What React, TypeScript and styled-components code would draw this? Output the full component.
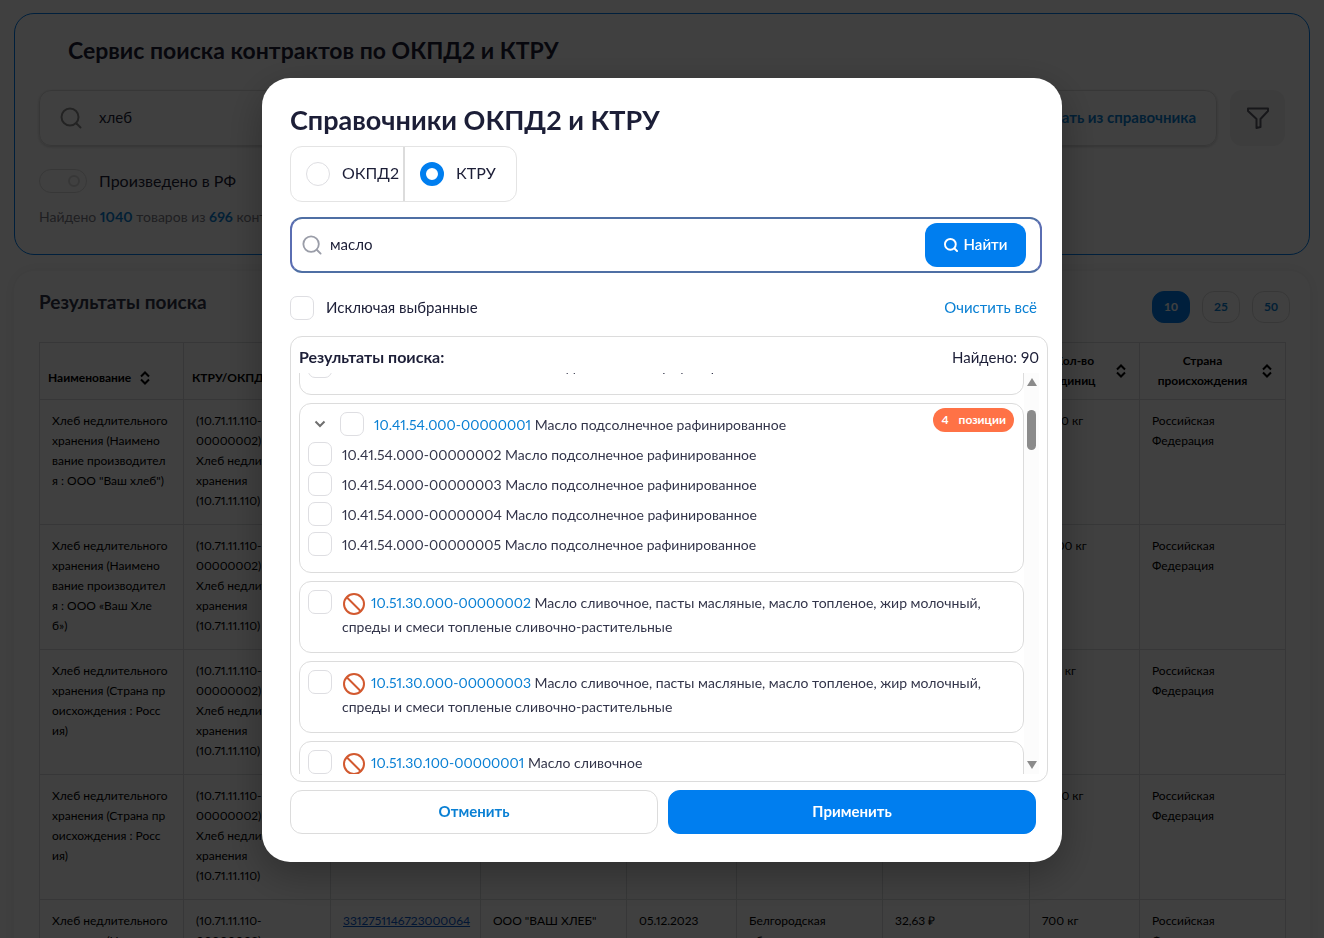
import React, { useLayoutEffect, useRef, useState } from "react";
import styled, { createGlobalStyle, css } from "styled-components";

const GlobalStyle = createGlobalStyle`
  *, *::before, *::after { box-sizing: border-box; }
  body {
    margin: 0;
    overflow: hidden;
    background: #fff;
    color: #1c1e37;
    font-family: Lato, "Open Sans", sans-serif;
    font-size: 15px;
    font-variant-numeric: proportional-nums;
  }
  button, input { font-family: inherit; }
`;

const Page = styled.div`
  display: flex;
  flex-direction: column;
  gap: 16px;
  height: 100vh;
  padding: 13px 14px 0;
  overflow: hidden;
`;

const SearchCard = styled.section`
  flex: none;
  border: 1px solid #007eef;
  border-radius: 20px;
  padding: 20px 24px 25px;
`;

const PageTitle = styled.h1`
  margin: 0 0 24px;
  padding-left: 29px;
  font-size: 23px;
  line-height: 32px;
  font-weight: 700;
`;

const SearchRow = styled.div`
  display: flex;
  gap: 13px;
`;

const SearchField = styled.div`
  flex: 1;
  display: flex;
  align-items: center;
  height: 56px;
  padding: 0 20px;
  border: 1px solid #dcdcdc;
  border-radius: 12px;
  box-shadow: 0 1px 3px rgba(0, 0, 0, 0.2);
`;

const TextInput = styled.input`
  flex: 1;
  min-width: 0;
  height: 40px;
  padding: 0 0 2px;
  border: 0;
  outline: 0;
  background: transparent;
  color: #1c1e37;
  font-size: 15px;
`;

const PageInput = styled(TextInput)`
  margin-left: 17px;
`;

const LinkButton = styled.button`
  padding: 0 0 2px;
  border: 0;
  background: none;
  color: #0a80d4;
  font-size: 15px;
  line-height: 20px;
  cursor: pointer;
`;

const BoldLinkButton = styled(LinkButton)`
  font-weight: 700;
`;

const FilterButton = styled.button`
  display: grid;
  place-items: center;
  width: 55px;
  height: 56px;
  border: 0;
  border-radius: 12px;
  background: #f3f3f3;
`;

const SwitchLabel = styled.label`
  display: flex;
  align-items: center;
  gap: 12px;
  margin-top: 23px;
  font-size: 16px;
  line-height: 24px;
`;

const SwitchInput = styled.input`
  appearance: none;
  display: flex;
  align-items: center;
  justify-content: flex-end;
  width: 48px;
  height: 24px;
  margin: 0;
  padding: 0 6px;
  border: 1px solid #dcdcdc;
  border-radius: 12px;

  &::before {
    content: "";
    width: 12px;
    height: 12px;
    border: 2px solid #dcdcdc;
    border-radius: 50%;
  }
`;

const FoundLine = styled.p`
  margin: 12px 0 0;
  color: #7d7d86;
  font-size: 14px;
  line-height: 24px;

  b { color: #0a80d4; }
`;

const ResultsCard = styled.section`
  flex: none;
  padding: 20px 24px 20px 25px;
  border-radius: 20px;
  box-shadow: 0 0 16px rgba(0, 0, 0, 0.08);
`;

const ResultsHead = styled.div`
  display: flex;
  justify-content: space-between;
  margin-bottom: 19px;
`;

const ResultsTitle = styled.h2`
  margin: 0;
  font-size: 19px;
  line-height: 22px;
  color: #33354a;
`;

const PageSizes = styled.div`
  display: flex;
  gap: 12px;
  margin-right: -4px;
`;

const PageSize = styled.button<{ $active?: boolean }>`
  width: 38px;
  height: 32px;
  padding: 0 0 2px;
  border: 1px solid ${(p) => (p.$active ? "#007eef" : "#dcdcdc")};
  border-radius: 12px;
  background: ${(p) => (p.$active ? "#007eef" : "#fff")};
  color: ${(p) => (p.$active ? "#fff" : "#0a80d4")};
  font-size: 12px;
  font-weight: 700;
`;

const Table = styled.table`
  width: 100%;
  table-layout: fixed;
  border-collapse: collapse;
  font-size: 12px;
  line-height: 20px;
  color: #000;
`;

const Th = styled.th`
  height: 57px;
  padding: 8px;
  border: 1px solid #dadcde;
`;

const ThInner = styled.div<{ $single?: boolean }>`
  display: flex;
  align-items: center;
  justify-content: space-between;
  ${(p) => p.$single && css`
    justify-content: flex-start;
    gap: 4px;
    padding-top: 14px;
    white-space: nowrap;
  `}

  span { flex: ${(p) => (p.$single ? "none" : "1")}; }
`;

const Td = styled.td`
  height: 125px;
  padding: 11px 12px;
  border: 1px solid #dadcde;
  vertical-align: top;
  white-space: pre;

  a { color: #0a58ca; }
`;

const Overlay = styled.div`
  position: fixed;
  inset: 0;
  display: grid;
  place-items: center;
  padding-top: 2px;
  background: rgba(0, 0, 0, 0.75);
`;

const Modal = styled.div`
  width: min(800px, 100%);
  padding: 24px 14px 28px 28px;
  border-radius: 28px;
  background: #fff;
  box-shadow: 0 12px 40px rgba(0, 0, 0, 0.3);
`;

const ModalTitle = styled.h2`
  margin: 0 0 8px;
  font-size: 27px;
  line-height: 36px;
`;

const Segments = styled.div`
  display: flex;
  width: fit-content;
  height: 56px;
  border: 1px solid #e4e4e4;
  border-radius: 12px;
`;

const Segment = styled.label`
  display: flex;
  align-items: center;
  gap: 12px;
  width: 112px;
  padding-left: 15px;
  font-size: 16px;

  & + & {
    width: 113px;
    border-left: 2px solid #dcdcdc;
  }

  span { padding-bottom: 4px; }
`;

const Radio = styled.input`
  appearance: none;
  flex: none;
  width: 24px;
  height: 24px;
  margin: 0;
  border: 1px solid #dedee2;
  border-radius: 50%;

  &:checked { border: 6px solid #007eef; }
`;

const ModalSearch = styled.div`
  display: flex;
  align-items: center;
  gap: 8px;
  height: 56px;
  margin: 15px 6px 0 0;
  padding: 0 14px 0 10px;
  border: 2px solid;
  border-color: #4f6fa4 #5a6db2;
  border-radius: 12px;
`;

const FindButton = styled.button`
  display: flex;
  align-items: center;
  justify-content: center;
  gap: 6px;
  width: 101px;
  height: 44px;
  border: 0;
  border-radius: 12px;
  background: #007eef;
  color: #fff;
  font-size: 15px;
  font-weight: 600;

  span { padding-bottom: 2px; }
`;

const OptionsRow = styled.div`
  display: flex;
  align-items: center;
  justify-content: space-between;
  margin: 23px 11px 0 0;
`;

const CheckLabel = styled.label`
  display: flex;
  gap: 12px;
  line-height: 22px;
`;

const Check = styled.input`
  appearance: none;
  flex: none;
  width: 24px;
  height: 24px;
  margin: 0;
  border: 1px solid #dedee2;
  border-radius: 7px;
  background: #fff;

  &:checked { background: #007eef; }
`;

const Panel = styled.div`
  margin-top: 16px;
  padding: 8px 8px 7px;
  border: 1px solid #dcdcdc;
  border-radius: 12px;
`;

const PanelHead = styled.div`
  display: flex;
  justify-content: space-between;
  height: 28px;
  line-height: 24px;

  b { font-size: 16px; }
`;

const Scroller = styled.div`
  display: flex;
  height: 401px;
`;

const Items = styled.div`
  flex: 1;
  display: flex;
  flex-direction: column;
  gap: 8px;
  overflow-y: auto;
  scrollbar-width: none;
`;

const Track = styled.div`
  display: flex;
  flex-direction: column;
  align-items: center;
  justify-content: space-between;
  width: 15px;
  padding: 5px 0;
  background: #fcfcfc;
`;

const Thumb = styled.div`
  width: 9px;
  height: 40px;
  margin: 24px 0 auto;
  border-radius: 5px;
  background: #8b8b8b;
`;

const Item = styled.div`
  position: relative;
  flex: none;
  padding: 8px 8px 0;
  border: 1px solid #dcdcdc;
  border-radius: 12px;
  color: #33354a;
  font-size: 14px;
`;

const PlainItem = styled(Item)`
  min-height: 72px;
`;

const GroupItem = styled(Item)`
  padding-bottom: 10px;
`;

const ItemRow = styled.div`
  display: flex;
  align-items: flex-start;
  min-height: 30px;
`;

const ItemLabel = styled.label`
  display: flex;
  gap: 10px;
  line-height: 24px;

  > span { padding-top: 1px; }
`;

const Code = styled.span`
  color: #0a80d4;
`;

const ExpandButton = styled.button`
  display: grid;
  place-items: center;
  width: 24px;
  height: 24px;
  margin-right: 8px;
  padding: 0;
  border: 0;
  background: none;
`;

const Badge = styled.span`
  position: absolute;
  top: 4px;
  right: 9px;
  display: flex;
  gap: 10px;
  padding: 0 8px;
  border-radius: 12px;
  background: #ff7246;
  color: #fff;
  font-size: 12px;
  font-weight: 700;
  line-height: 24px;
`;

const BanIcon = styled.svg`
  margin: -4px 5px -4px 0;
  vertical-align: middle;
`;

const Actions = styled.div`
  display: flex;
  gap: 10px;
  margin: 8px 12px 0 0;
`;

const ActionButton = styled.button<{ $primary?: boolean }>`
  flex: 1;
  height: 44px;
  padding: 0 0 2px;
  border: 1px solid ${(p) => (p.$primary ? "#007eef" : "#dcdcdc")};
  border-radius: 12px;
  background: ${(p) => (p.$primary ? "#007eef" : "#fff")};
  color: ${(p) => (p.$primary ? "#fff" : "#0a80d4")};
  font-size: 15px;
  font-weight: 700;
`;

const Magnifier = ({ size, color, width }: { size: number; color: string; width: number }) => (
  <svg width={size} height={size} viewBox="0 0 22 22" fill="none" stroke={color} strokeWidth={width} strokeLinecap="round" aria-hidden="true">
    <circle cx="10" cy="10" r="8.5" />
    <path d="M16.5 16.5 20.5 20.5" />
  </svg>
);

const SortIcon = () => (
  <svg width="20" height="16" viewBox="0 0 20 16" fill="none" stroke="#000" strokeWidth="2" aria-hidden="true">
    <path d="M6 6.5 10 2.5 14 6.5M6 9.5 10 13.5 14 9.5" />
  </svg>
);

const Ban = () => (
  <BanIcon width="24" height="24" viewBox="0 0 24 24" fill="none" stroke="#d2592f" strokeWidth="2" aria-hidden="true">
    <circle cx="12" cy="12" r="10" />
    <path d="M4.5 5 19 19.5" />
  </BanIcon>
);

const columns = [
  { width: 144, title: "Наименование", single: true },
  { width: 147, title: "КТРУ/ОКПД2", single: true },
  { width: 150, title: "Номер контракта" },
  { width: 146, title: "Заказчик" },
  { width: 110, title: "Дата" },
  { width: 146, title: "Регион" },
  { width: 147, title: "Цена" },
  { width: 110, title: "Кол-во единиц" },
  { width: 146, title: "Страна происхождения" },
];

const rows = [
  { name: 'Хлеб недлительного\nхранения (Наимено\nвание производител\nя : ООО "Ваш хлеб")', amount: "1500 кг" },
  { name: "Хлеб недлительного\nхранения (Наимено\nвание производител\nя : ООО «Ваш Хле\nб»)", amount: "2000 кг" },
  { name: "Хлеб недлительного\nхранения (Страна пр\nоисхождения : Росс\nия)", amount: "375 кг" },
  { name: "Хлеб недлительного\nхранения (Страна пр\nоисхождения : Росс\nия)", amount: "1200 кг" },
  { name: "Хлеб недлительного\nхранения (Наимено\nвание производител\nя)", amount: "700 кг" },
];

const ktru = "(10.71.11.110-\n00000002)\nХлеб недлительного\nхранения\n(10.71.11.110)";

type GroupProps = { prefix: string; name: string };

const Group = ({ prefix, name }: GroupProps) => (
  <GroupItem>
    <ItemRow>
      <ExpandButton type="button" aria-label="Свернуть">
        <svg width="12" height="8" viewBox="0 0 12 8" fill="none" stroke="#6f6f6f" strokeWidth="2"><path d="M1.5 1.5 6 6 10.5 1.5" /></svg>
      </ExpandButton>
      <ItemLabel>
        <Check type="checkbox" />
        <span><Code>{prefix}1</Code> {name}</span>
      </ItemLabel>
    </ItemRow>
    {[2, 3, 4, 5].map((n) => (
      <ItemRow key={n}>
        <ItemLabel>
          <Check type="checkbox" />
          <span>{prefix}{n} {name}</span>
        </ItemLabel>
      </ItemRow>
    ))}
    <Badge><span>4</span><span>позиции</span></Badge>
  </GroupItem>
);

const Banned = ({ code, name }: { code: string; name: string }) => (
  <PlainItem>
    <ItemLabel>
      <Check type="checkbox" />
      <span><Ban /><Code>{code}</Code> {name}</span>
    </ItemLabel>
  </PlainItem>
);

const butter = "Масло сливочное, пасты масляные, масло топленое, жир молочный, спреды и смеси топленые сливочно-растительные";

export default function App() {
  const [query, setQuery] = useState("масло");
  const [kind, setKind] = useState("ktru");
  const items = useRef<HTMLDivElement>(null);

  useLayoutEffect(() => {
    if (items.current) items.current.scrollTop = 148;
  }, []);

  return (
    <>
      <GlobalStyle />
      <Page>
        <SearchCard>
          <PageTitle>Сервис поиска контрактов по ОКПД2 и КТРУ</PageTitle>
          <SearchRow>
            <SearchField>
              <Magnifier size={22} color="#8c8c8c" width={2} />
              <PageInput aria-label="Поиск" defaultValue="хлеб" />
              <BoldLinkButton type="button">Выбрать из справочника</BoldLinkButton>
            </SearchField>
            <FilterButton type="button" aria-label="Фильтр">
              <svg width="22" height="22" viewBox="0 0 22 22" fill="none" stroke="#5c5c68" strokeWidth="2" strokeLinejoin="round">
                <path d="M1 1.5H21V4L13.5 12V20L9.5 21V12L1 4Z" />
              </svg>
            </FilterButton>
          </SearchRow>
          <SwitchLabel><SwitchInput type="checkbox" />Произведено в РФ</SwitchLabel>
          <FoundLine>Найдено <b>1040</b> товаров из <b>696</b> контрактов</FoundLine>
        </SearchCard>

        <ResultsCard>
          <ResultsHead>
            <ResultsTitle>Результаты поиска</ResultsTitle>
            <PageSizes>
              <PageSize type="button" $active>10</PageSize>
              <PageSize type="button">25</PageSize>
              <PageSize type="button">50</PageSize>
            </PageSizes>
          </ResultsHead>
          <Table>
            <colgroup>
              {columns.map((c) => <col key={c.title} style={{ width: `${(c.width / 1246) * 100}%` }} />)}
            </colgroup>
            <thead>
              <tr>
                {columns.map((c) => (
                  <Th key={c.title}><ThInner $single={c.single}><span>{c.title}</span><SortIcon /></ThInner></Th>
                ))}
              </tr>
            </thead>
            <tbody>
              {rows.map((r, i) => (
                <tr key={i}>
                  <Td>{r.name}</Td>
                  <Td>{ktru}</Td>
                  <Td><a href="#contract">3312751146723000064</a></Td>
                  <Td>ООО "ВАШ ХЛЕБ"</Td>
                  <Td>05.12.2023</Td>
                  <Td>{"Белгородская\nобласть"}</Td>
                  <Td>32,63 ₽</Td>
                  <Td>{r.amount}</Td>
                  <Td>{"Российская\nФедерация"}</Td>
                </tr>
              ))}
            </tbody>
          </Table>
        </ResultsCard>
      </Page>

      <Overlay>
        <Modal role="dialog" aria-modal="true" aria-labelledby="dialog-title">
          <ModalTitle id="dialog-title">Справочники ОКПД2 и КТРУ</ModalTitle>
          <Segments>
            <Segment><Radio type="radio" name="kind" checked={kind === "okpd"} onChange={() => setKind("okpd")} /><span>ОКПД2</span></Segment>
            <Segment><Radio type="radio" name="kind" checked={kind === "ktru"} onChange={() => setKind("ktru")} /><span>КТРУ</span></Segment>
          </Segments>
          <ModalSearch>
            <Magnifier size={20} color="#9a9da8" width={2} />
            <TextInput aria-label="Поиск по справочнику" value={query} onChange={(e) => setQuery(e.target.value)} />
            <FindButton type="button"><Magnifier size={14} color="#fff" width={3} /><span>Найти</span></FindButton>
          </ModalSearch>
          <OptionsRow>
            <CheckLabel><Check type="checkbox" />Исключая выбранные</CheckLabel>
            <LinkButton type="button">Очистить всё</LinkButton>
          </OptionsRow>
          <Panel>
            <PanelHead><b>Результаты поиска:</b><span>Найдено: 90</span></PanelHead>
            <Scroller>
              <Items ref={items}>
                <Group prefix="10.41.24.000-0000000" name="Масло подсолнечное нерафинированное" />
                <Group prefix="10.41.54.000-0000000" name="Масло подсолнечное рафинированное" />
                <Banned code="10.51.30.000-00000002" name={butter} />
                <Banned code="10.51.30.000-00000003" name={butter} />
                <Banned code="10.51.30.100-00000001" name="Масло сливочное" />
              </Items>
              <Track aria-hidden="true">
                <svg width="10" height="8" viewBox="0 0 10 8" fill="#8b8b8b"><path d="M5 0 10 8H0Z" /></svg>
                <Thumb />
                <svg width="10" height="8" viewBox="0 0 10 8" fill="#8b8b8b"><path d="M5 8 10 0H0Z" /></svg>
              </Track>
            </Scroller>
          </Panel>
          <Actions>
            <ActionButton type="button">Отменить</ActionButton>
            <ActionButton type="button" $primary>Применить</ActionButton>
          </Actions>
        </Modal>
      </Overlay>
    </>
  );
}
